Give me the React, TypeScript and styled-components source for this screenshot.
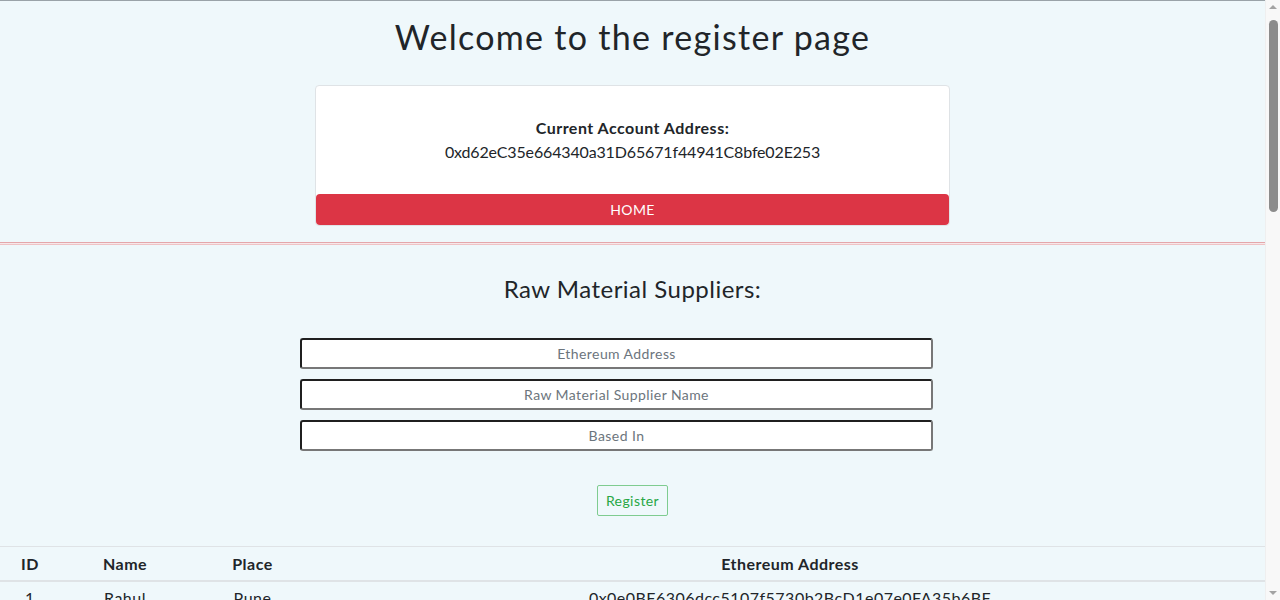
import React from "react";
import styled, { createGlobalStyle } from "styled-components";

const Global = createGlobalStyle`
  html, body { margin: 0; padding: 0; }
  body {
    background: #eff8fb;
    font-family: Lato, "Open Sans", Arial, sans-serif;
    color: #212529;
    letter-spacing: 0.03em;
  }
`;

const Page = styled.div`
  width: 1265px;
  border-top: 1px solid #9aa3a8;
  min-height: 1780px;
  display: flex;
  flex-direction: column;
  align-items: center;
`;

const Title = styled.h1`
  margin: 17px 0 29px;
  font-size: 34px;
  line-height: 38px;
  font-weight: 400;
  letter-spacing: 1.3px;
  text-align: center;
`;

const Card = styled.div`
  width: 50%;
  background: #fff;
  border: 1px solid #dfe3e6;
  border-radius: 4px;
  display: flex;
  flex-direction: column;
  align-items: stretch;
`;

const CardBody = styled.div`
  padding: 30px 0;
  text-align: center;
  font-size: 16px;
  line-height: 24px;
`;

const Label = styled.div`
  font-weight: 700;
`;

const Address = styled.div`
  letter-spacing: -0.15px;
`;

const HomeButton = styled.button`
  background: #dc3545;
  color: #fff;
  border: none;
  border-radius: 4px;
  height: 31px;
  font-family: inherit;
  font-size: 14px;
  letter-spacing: 0.03em;
  text-transform: uppercase;
  cursor: pointer;
`;

const Rule = styled.hr`
  align-self: stretch;
  margin: 16px 0 0;
  height: 1px;
  border: none;
  border-top: 1px solid #e4a7ab;
  border-bottom: 1px solid #efc3c5;
  background: #f7e8ea;
`;

const Subtitle = styled.h4`
  margin: 29px 0 35px;
  font-size: 24px;
  line-height: 29px;
  font-weight: 400;
`;

const Form = styled.form`
  align-self: stretch;
  display: flex;
  flex-direction: column;
  align-items: center;
`;

const Fields = styled.div`
  align-self: stretch;
  display: flex;
  flex-direction: column;
  align-items: center;
  gap: 10px;
  padding-right: 32px;
`;

const Input = styled.input`
  box-sizing: border-box;
  width: 633px;
  height: 31px;
  border-style: solid;
  border-width: 2px;
  border-color: #1f1f1f #777 #777 #1f1f1f;
  border-radius: 3px;
  background: #fff;
  text-align: center;
  font-family: inherit;
  font-size: 14px;
  letter-spacing: 0.03em;
  &::placeholder { color: #6c757d; }
`;

const RegisterButton = styled.button`
  margin-top: 34px;
  height: 31px;
  padding: 0 8px;
  background: transparent;
  border: 1px solid #7fcc90;
  border-radius: 2px;
  color: #28a745;
  font-family: inherit;
  font-size: 14px;
  letter-spacing: 0.03em;
  cursor: pointer;
`;

const Table = styled.table`
  margin-top: 30px;
  align-self: stretch;
  table-layout: fixed;
  border-collapse: collapse;
  font-size: 16px;
  line-height: 24px;
`;

const Th = styled.th<{ $w?: number }>`
  width: ${(p) => (p.$w ? `${p.$w}px` : "auto")};
  padding: 5px 4px 4px;
  text-align: center;
  font-weight: 700;
  border-top: 1px solid #dfe3e6;
  border-bottom: 2px solid #dfe3e6;
`;

const Td = styled.td`
  padding: 4px;
  text-align: center;
  border-top: 1px solid #dfe3e6;
`;

const Scrollbar = styled.div`
  position: fixed;
  top: 0;
  right: 0;
  width: 15px;
  height: 100vh;
  background: #f8f8f8;
  border-left: 1px solid #efefef;
  box-sizing: border-box;
  display: flex;
  flex-direction: column;
  align-items: center;
`;

const Arrow = styled.div<{ $down?: boolean }>`
  width: 0;
  height: 0;
  margin: 5px 0;
  border-left: 4px solid transparent;
  border-right: 4px solid transparent;
  ${(p) =>
    p.$down
      ? "border-top: 4px solid #a3a3a3; margin-top: auto;"
      : "border-bottom: 4px solid #a3a3a3;"}
`;

const Thumb = styled.div`
  width: 9px;
  height: 192px;
  margin-top: 6px;
  border-radius: 5px;
  background: #8c8c8c;
`;

export default function App() {
  return (
    <>
      <Global />
      <Page>
        <Title>Welcome to the register page</Title>
        <Card>
          <CardBody>
            <Label>Current Account Address:</Label>
            <Address>0xd62eC35e664340a31D65671f44941C8bfe02E253</Address>
          </CardBody>
          <HomeButton>HOME</HomeButton>
        </Card>
        <Rule />
        <Subtitle>Raw Material Suppliers:</Subtitle>
        <Form onSubmit={(e) => e.preventDefault()}>
          <Fields>
            <Input placeholder="Ethereum Address" />
            <Input placeholder="Raw Material Supplier Name" />
            <Input placeholder="Based In" />
          </Fields>
          <RegisterButton type="submit">Register</RegisterButton>
        </Form>
        <Table>
          <thead>
            <tr>
              <Th $w={52}>ID</Th>
              <Th $w={122}>Name</Th>
              <Th $w={117}>Place</Th>
              <Th>Ethereum Address</Th>
            </tr>
          </thead>
          <tbody>
            <tr>
              <Td>1</Td>
              <Td>Rahul</Td>
              <Td>Pune</Td>
              <Td>0x0e0BF6306dcc5107f5730b2BcD1e07e0FA35b6BF</Td>
            </tr>
          </tbody>
        </Table>
      </Page>
      <Scrollbar>
        <Arrow />
        <Thumb />
        <Arrow $down />
      </Scrollbar>
    </>
  );
}
